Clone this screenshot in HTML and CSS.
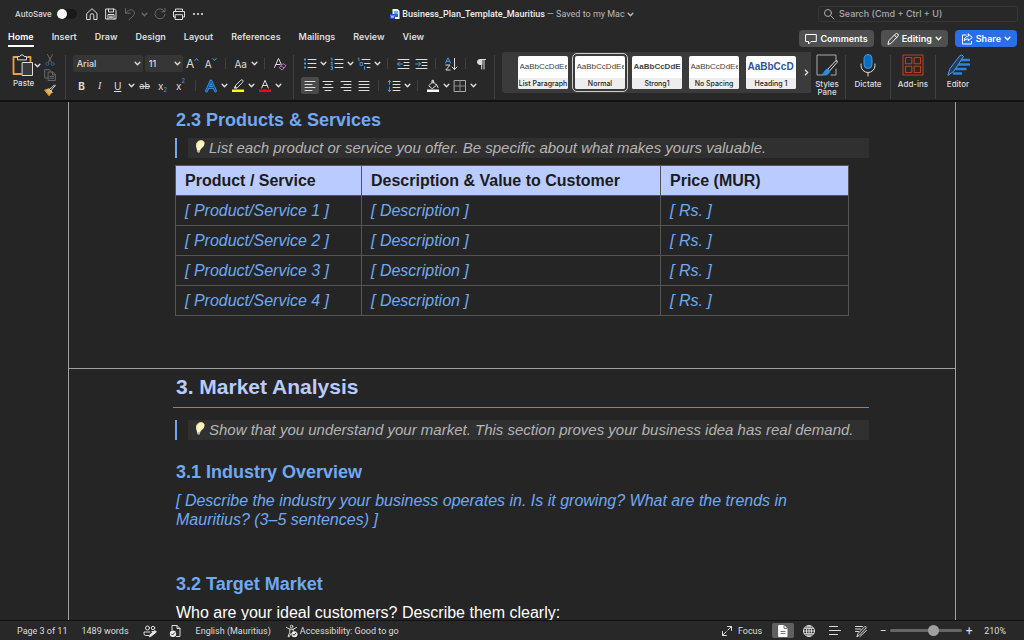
FILE: index.html
```html
<!DOCTYPE html>
<html lang="en">

<head>
    <meta charset="UTF-8">
    <meta name="viewport" content="width=device-width, initial-scale=1.0">
    <title>Business_Plan_Template_Mauritius</title>
    <link rel="stylesheet" href="styles.css">
</head>

<body>
    <!-- shared icons -->
    <svg class="sprite">
        <symbol id="chev" viewBox="0 0 6 6"><path d="M1 2l2 2 2-2" fill="none" stroke="currentColor" stroke-width="1.2" stroke-linecap="round" stroke-linejoin="round"/></symbol>
        <symbol id="bulb" viewBox="0 0 14 16"><path d="M4.500 12L3.500 8C2 4 4.500 .5 8 .5c3 0 4 2.500 3 5C10.300 7.300 8 8 7.300 10l-.8 2z" fill="#fff3c4"/><path d="M4 6C3 3 5 .5 8 .5c2 0 3.200 1 3.300 2.500" fill="none" stroke="#f3d27a" stroke-width=".8"/><path d="M4.300 10.200h2.900l-.7 2.600H4.800z" fill="#b9b39c"/></symbol>
    </svg>

    <div class="app">
        <!-- title bar -->
        <header class="titlebar">
            <div class="quick">
                <label class="autosave">AutoSave <input type="checkbox" class="toggle"></label>
                <button aria-label="Home"><svg class="i14" viewBox="0 0 14 14"><path d="M2 6.300L7 1.700l5 4.600V12.500H8.800V8.500a1.800 1.800 0 0 0-3.600 0v4H2z"/></svg></button>
                <button aria-label="Save"><svg class="i14" viewBox="0 0 14 14"><path d="M2 2h8.500L12 3.500V12H2zM4.500 2v3h5V2M4 12V7.500h6V12M5.500 9.200h3M5.500 10.700h3"/></svg></button>
                <button aria-label="Undo" class="dim"><svg class="i14" viewBox="0 0 14 14"><path d="M2.500 1.500v4.700h4.700M2.700 6C5 3 8 2 10 3.500c2.300 1.800 1.500 4 0 5.500L6 12.700"/></svg></button>
                <button aria-label="Undo list" class="dim narrow"><svg class="chev"><use href="#chev"/></svg></button>
                <button aria-label="Redo" class="dim"><svg class="i14" viewBox="0 0 14 14"><path d="M11.500 4.500A5 5 0 1 0 12 7.500M12 1.500v3.300H8.700"/></svg></button>
                <button aria-label="Print"><svg class="i14" viewBox="0 0 14 14"><path d="M3.500 4.500V2h7v2.500M3.500 10H1.500V4.500h11V10h-2M3.500 7.700h7V12.500h-7z"/></svg></button>
                <button aria-label="More"><svg class="i14 solid" viewBox="0 0 14 14"><circle cx="3" cy="7" r="1.100"/><circle cx="7" cy="7" r="1.100"/><circle cx="11" cy="7" r="1.100"/></svg></button>
            </div>
            <div class="doc-name">
                <svg class="file-icon" viewBox="0 0 10 12"><path d="M2.500 1h5L9.500 3v8h-7z" fill="#f5f8ff"/><path d="M4 3h4v5H4z" fill="#55b6f5"/><path d="M4 6h4v3H4z" fill="#2167d8"/><path d="M0 6h5v5H0z" fill="#1c4fc4"/><path d="M1 7.300l.8 2.400.7-2 .7 2 .8-2.400" fill="none" stroke="#fff" stroke-width=".6"/></svg>
                <b>Business_Plan_Template_Mauritius</b><span>— Saved to my Mac</span>
                <svg class="chev"><use href="#chev"/></svg>
            </div>
            <label class="search">
                <svg class="i12" viewBox="0 0 12 12"><circle cx="5" cy="5" r="3.500"/><path d="M7.600 7.600L11 11"/></svg>
                <input type="text" placeholder="Search (Cmd + Ctrl + U)" aria-label="Search">
            </label>
        </header>

        <!-- tabs -->
        <div class="tabs">
            <nav>
                <a href="#" class="active">Home</a>
                <a href="#">Insert</a>
                <a href="#">Draw</a>
                <a href="#">Design</a>
                <a href="#">Layout</a>
                <a href="#">References</a>
                <a href="#">Mailings</a>
                <a href="#">Review</a>
                <a href="#">View</a>
            </nav>
            <div class="actions">
                <button><svg class="i12" viewBox="0 0 12 12"><path d="M1 1.500h10.300v7H6L3.500 11V8.500H1z"/></svg>Comments</button>
                <button><svg class="i12" viewBox="0 0 12 12"><path d="M1 11l.8-3.300L8.500 1a1.300 1.300 0 0 1 2.300 2.300L4.200 10.200zM7.500 2.200l2.200 2.200"/></svg>Editing<svg class="chev"><use href="#chev"/></svg></button>
                <button class="share"><svg class="i12" viewBox="0 0 12 12"><path d="M5 2H1.500v9h9V8.500M7.300 1l4 3.500-4 3.200V5.800C5.500 5.800 4.200 6.500 3.200 8c.1-2.700 1.500-4.700 4.100-5z"/></svg>Share<svg class="chev"><use href="#chev"/></svg></button>
            </div>
        </div>

        <!-- ribbon -->
        <div class="ribbon">
            <div class="clipboard">
                <button class="paste">
                    <span>
                        <svg class="i24" viewBox="0 0 24 24"><path d="M6 4H2.500v17H10M17 4h2.500v4" stroke="#e8a33d" stroke-width="1.800"/><path d="M6.500 6.500V3.500h2.300a2.300 2.300 0 0 1 4.400 0h2.300v3z"/><path d="M11.500 9.500h10v13h-10z" fill="#3a3a3a"/></svg>
                        <svg class="chev"><use href="#chev"/></svg>
                    </span>
                    Paste
                </button>
                <div class="clip-tools">
                    <button aria-label="Cut" class="dim"><svg class="i12" viewBox="0 0 12 12"><path d="M3.500 0.500l4.200 8M8.500 0.500l-4.200 8"/><g stroke="#2c5f8c"><circle cx="3.300" cy="10" r="1.500"/><circle cx="8.700" cy="10" r="1.500"/></g></svg></button>
                    <button aria-label="Copy" class="dim"><svg class="i12" viewBox="0 0 12 12"><path d="M4 9H.7V.7h4.600L7 2.300M4.500 3h4.300l2.500 2.500v6H4.500zM8.500 3v2.800h2.800M6 7.500h3.500M6 9.300h3.500"/></svg></button>
                    <button aria-label="Format painter"><svg class="i12" viewBox="0 0 12 12"><path d="M1 6l4-.8L8 8l-2.800 3.500z" fill="#f0b04e" stroke="#e8a33d"/><path d="M4.300 4.600l4 4M5.800 4.800l1.700-1 3-3 .9.900-3 3-1 1.800"/></svg></button>
                </div>
            </div>
            <i class="divider"></i>

            <div class="group">
                <div class="row">
                    <span class="pick font"><select aria-label="Font"><option>Arial</option></select><svg class="chev"><use href="#chev"/></svg></span>
                    <span class="pick size"><select aria-label="Font size"><option>11</option></select><svg class="chev"><use href="#chev"/></svg></span>
                    <button aria-label="Grow font" class="letter big">A<svg class="caret" viewBox="0 0 5 5"><path d="M.8 3.500L2.500 1.500l1.700 2"/></svg></button>
                    <button aria-label="Shrink font" class="letter">A<svg class="caret" viewBox="0 0 5 5"><path d="M.8 1.500l1.700 2 1.700-2"/></svg></button>
                    <i class="sep"></i>
                    <button class="letter">Aa</button>
                    <button class="drop" aria-label="Case options"><svg class="chev"><use href="#chev"/></svg></button>
                    <i class="sep"></i>
                    <button aria-label="Clear formatting"><svg class="i14" viewBox="0 0 14 14"><path d="M1.500 10.500L5.500 1.500l2.800 6M3 7.500h4"/><path d="M6.500 10.500l3.500-4 3 2.200-3.500 4zM8 8.800l3 2.200" stroke="#b86fc6"/></svg></button>
                </div>
                <div class="row">
                    <button class="letter"><b>B</b></button>
                    <button class="letter serif"><i>I</i></button>
                    <button class="letter"><u>U</u></button>
                    <button class="drop" aria-label="Underline styles"><svg class="chev"><use href="#chev"/></svg></button>
                    <button class="letter small"><s>ab</s></button>
                    <button class="letter">x<sub>2</sub></button>
                    <button class="letter">x<sup>2</sup></button>
                    <i class="sep"></i>
                    <button aria-label="Text effects"><svg class="i14" viewBox="0 0 14 14"><path d="M2.500 12L7 2l4.500 10M4.200 8.500h5.600" stroke="#2b8be6" stroke-width="3"/><path d="M2.500 12L7 2l4.500 10M4.200 8.500h5.600" stroke="#1d4468" stroke-width=".8"/></svg></button>
                    <button class="drop" aria-label="Text effect options"><svg class="chev"><use href="#chev"/></svg></button>
                    <button aria-label="Highlight"><svg class="i14" viewBox="0 0 14 14"><path d="M4.500 8.500V6.500L9.800 1.200a1 1 0 0 1 1.900 1.900L6.500 8.500zM4.500 7L3 9h2.500"/><path d="M1 10.500h12V13H1z" fill="#ff0" stroke="none"/></svg></button>
                    <button class="drop" aria-label="Highlight colors"><svg class="chev"><use href="#chev"/></svg></button>
                    <button aria-label="Font color"><svg class="i14" viewBox="0 0 14 14"><path d="M3.700 9L7 1.300 10.300 9M4.800 6.500h4.400"/><path d="M1 10.500h12V13H1z" fill="#f00" stroke="none"/></svg></button>
                    <button class="drop" aria-label="Font colors"><svg class="chev"><use href="#chev"/></svg></button>
                </div>
            </div>
            <i class="divider"></i>

            <div class="group para">
                <div class="row">
                    <button aria-label="Bullets"><svg class="i14" viewBox="0 0 14 14"><path d="M5 2.500h8M5 6.500h8M5 10.500h8"/><path d="M1 1.500h2v2H1zM1 5.500h2v2H1zM1 9.500h2v2H1z" fill="#3b9cf0" stroke="none"/></svg></button>
                    <button class="drop" aria-label="Bullet styles"><svg class="chev"><use href="#chev"/></svg></button>
                    <button aria-label="Numbering"><svg class="i14" viewBox="0 0 14 14"><path d="M5 2.500h8M5 6.500h8M5 10.500h8"/><path d="M1 1.500l1-.5v3M1 5.500h1.500L1 7.800h1.800M1 9.500h1.500v3H1M1.500 11h1" stroke="#3b8fd8"/></svg></button>
                    <button class="drop" aria-label="Number styles"><svg class="chev"><use href="#chev"/></svg></button>
                    <button aria-label="Multilevel list"><svg class="i14" viewBox="0 0 14 14"><path d="M5 2.500h8M7.500 6.500h5.500M10 10.500h3"/><path d="M1 1.500l1-.5v3M3.500 5.500h2v3h-2zM7.500 9.500v3" stroke="#3b8fd8"/></svg></button>
                    <button class="drop" aria-label="List styles"><svg class="chev"><use href="#chev"/></svg></button>
                    <i class="sep"></i>
                    <button aria-label="Decrease indent"><svg class="i14" viewBox="0 0 14 14"><path d="M2 2.500h11M8 5.500h5M8 8.500h5M2 11.500h11"/><path d="M6.500 7h-5M3.500 5l-2 2 2 2" stroke="#3b9cf0"/></svg></button>
                    <button aria-label="Increase indent"><svg class="i14" viewBox="0 0 14 14"><path d="M2 2.500h11M8 5.500h5M8 8.500h5M2 11.500h11"/><path d="M1.500 7h5M4.500 5l2 2-2 2" stroke="#3b9cf0"/></svg></button>
                    <i class="sep"></i>
                    <button aria-label="Sort"><svg class="i14" viewBox="0 0 14 14"><path d="M1.500 6L4 .8 6.500 6M2.400 4.300h3.200" stroke="#3b9cf0"/><path d="M1.800 8H6l-4.200 5H6.200M10.500 1.500v11M8 10l2.500 2.500L13 10"/></svg></button>
                    <i class="sep"></i>
                    <button aria-label="Show marks"><svg class="i14" viewBox="0 0 14 14"><path d="M7 2.500h4.500M7.700 2.500V12M10 2.500V12"/><path d="M7.500 2.500H6a2.500 2.500 0 0 0 0 5h1.500z" fill="#ddd"/></svg></button>
                </div>
                <div class="row">
                    <button aria-label="Align left" class="on"><svg class="i14" viewBox="0 0 14 14"><path d="M2 2.500h10M2 5.500h7M2 8.500h10M2 11.500h7"/></svg></button>
                    <button aria-label="Center"><svg class="i14" viewBox="0 0 14 14"><path d="M2 2.500h10M4 5.500h6M2 8.500h10M4 11.500h6"/></svg></button>
                    <button aria-label="Align right"><svg class="i14" viewBox="0 0 14 14"><path d="M2 2.500h10M5 5.500h7M2 8.500h10M5 11.500h7"/></svg></button>
                    <button aria-label="Justify"><svg class="i14" viewBox="0 0 14 14"><path d="M2 2.500h10M2 5.500h10M2 8.500h10M2 11.500h10"/></svg></button>
                    <i class="sep"></i>
                    <button aria-label="Line spacing"><svg class="i14" viewBox="0 0 14 14"><path d="M6 2.500h7M6 5.500h7M6 8.500h7M6 11.500h7"/><path d="M2.500 1.500v4M1 3l1.500-1.700L4 3M2.500 8v4.500M1 11l1.500 1.700L4 11" stroke="#3b9cf0"/></svg></button>
                    <button class="drop" aria-label="Spacing options"><svg class="chev"><use href="#chev"/></svg></button>
                    <i class="sep"></i>
                    <button aria-label="Shading"><svg class="i14" viewBox="0 0 14 14"><path d="M3 6.500L7 2.500l3.500 3.700-4 3.300zM6 4V1.300h1.500V4M10.500 5.500l1.500 3"/><path d="M1 10.500h12V13H1z" fill="#fff" stroke="none"/></svg></button>
                    <button class="drop" aria-label="Shading colors"><svg class="chev"><use href="#chev"/></svg></button>
                    <button aria-label="Borders"><svg class="i14" viewBox="0 0 14 14"><path d="M1.500 1.500h11v11h-11z" stroke="#aaa"/><path d="M7 1.500v11M1.500 7h11" stroke="#888"/></svg></button>
                    <button class="drop" aria-label="Border styles"><svg class="chev"><use href="#chev"/></svg></button>
                </div>
            </div>
            <i class="divider"></i>

            <div class="gallery">
                <button class="style"><span class="sample">AaBbCcDdEe</span><span class="name">List Paragraph</span></button>
                <button class="style current"><span class="sample">AaBbCcDdEe</span><span class="name">Normal</span></button>
                <button class="style strong"><span class="sample">AaBbCcDdE</span><span class="name">Strong1</span></button>
                <button class="style"><span class="sample">AaBbCcDdEe</span><span class="name">No Spacing</span></button>
                <button class="style heading"><span class="sample">AaBbCcD</span><span class="name">Heading 1</span></button>
                <button class="more" aria-label="More styles"><svg class="chev right"><use href="#chev"/></svg></button>
            </div>

            <div class="tools">
                <button><svg class="i24" viewBox="0 0 24 24"><path d="M21 8V2H2v20h6M21 16v6h-5" stroke="#aaa"/><path d="M12.500 16.500L21 7.500q2 0 1 2L14.500 18z"/><path d="M12.500 16c-3 0-2.500 4-5.500 5.500 4 1.500 7.500 0 7.500-3.500z" fill="#2d8ddd" stroke="#2d8ddd"/></svg>Styles Pane</button>
                <i class="divider"></i>
                <button><svg class="i24" viewBox="0 0 24 24"><rect x="8" y="1.500" width="8" height="14" rx="4" fill="#0f6cbd" stroke="#3b9cf0"/><path d="M5 11v1.500a7 7 0 0 0 14 0V11M12 19.500V23"/></svg>Dictate</button>
                <i class="divider"></i>
                <button><svg class="i24" viewBox="0 0 24 24"><path d="M2 2h20v20H2zM4.500 4.500h6.300v6.300H4.500zM13.200 4.500h6.300v6.300h-6.300zM4.500 13.200h6.300v6.300H4.500zM13.200 13.200h6.300v6.300h-6.300z" stroke="#b9411c" stroke-width="1.100"/></svg>Add-ins</button>
                <i class="divider"></i>
                <button><svg class="i24" viewBox="0 0 24 24"><path d="M14.500 7H23M13 11.500h10M10.500 16h9M8 20.500h7" stroke="#2b83e0" stroke-width="2.400"/><path d="M2 22l2-6.500L14 2.500q2-1.500 3.500 1L8 18z" fill="#223c5a" stroke="#4ba0f0"/></svg>Editor</button>
            </div>
        </div>

        <!-- document -->
        <main class="canvas">
            <section class="page">
                <h3>2.3 Products &amp; Services</h3>
                <div class="hint"><p><svg class="bulb"><use href="#bulb"/></svg>List each product or service you offer. Be specific about what makes yours valuable.</p></div>
                <table>
                    <thead>
                        <tr><th class="c1">Product / Service</th><th class="c2">Description &amp; Value to Customer</th><th>Price (MUR)</th></tr>
                    </thead>
                    <tbody>
                        <tr><td>[ Product/Service 1 ]</td><td>[ Description ]</td><td>[ Rs. ]</td></tr>
                        <tr><td>[ Product/Service 2 ]</td><td>[ Description ]</td><td>[ Rs. ]</td></tr>
                        <tr><td>[ Product/Service 3 ]</td><td>[ Description ]</td><td>[ Rs. ]</td></tr>
                        <tr><td>[ Product/Service 4 ]</td><td>[ Description ]</td><td>[ Rs. ]</td></tr>
                    </tbody>
                </table>
            </section>
            <section class="page next">
                <h2>3. Market Analysis</h2>
                <div class="hint"><p><svg class="bulb"><use href="#bulb"/></svg>Show that you understand your market. This section proves your business idea has real demand.</p></div>
                <h3 class="first">3.1 Industry Overview</h3>
                <p class="field">[ Describe the industry your business operates in. Is it growing? What are the trends in Mauritius? (3–5 sentences) ]</p>
                <h3>3.2 Target Market</h3>
                <p>Who are your ideal customers? Describe them clearly:</p>
            </section>
        </main>

        <!-- status bar -->
        <footer class="status">
            <div class="left">
                <span>Page 3 of 11</span>
                <span>1489 words</span>
                <button aria-label="Track changes"><svg class="i14" viewBox="0 0 14 14"><circle cx="4.500" cy="4" r="2"/><circle cx="10" cy="4" r="1.700"/><path d="M6 11.500H2.500Q1 11.500 1 9.500V8h6M9 7.500h2"/><path d="M6.500 12.500l.6-2 5-4 1.300 1.500-5 4z" fill="#eee"/></svg></button>
                <button aria-label="Proofing"><svg class="i14" viewBox="0 0 14 14"><path d="M4 6V1.500h5L12 4.500v8H8.500M9 1.500v3h3"/><circle cx="5" cy="9.800" r="3.200" fill="#eee" stroke="none"/><path d="M3.500 10l1 1 2.200-2.300" stroke="#222"/></svg></button>
                <span>English (Mauritius)</span>
                <button class="access"><svg class="i14" viewBox="0 0 14 14"><circle cx="6.500" cy="2.500" r="1.300"/><path d="M1.500 3.500l3.300 1.700h3.400l3.300-1.700M4.800 5.200v3L3 12.500l1.200.3L6 9.500M8.200 5.200V7"/><circle cx="9.500" cy="10.200" r="3" fill="#eee" stroke="none"/><path d="M8 10.300l1 1 2-2.300" stroke="#222"/></svg>Accessibility: Good to go</button>
            </div>
            <div class="view">
                <button class="focus"><svg class="i12" viewBox="0 0 12 12"><path d="M6.500 1.500h4v4M10.500 1.500L6.800 5.200M5.500 10.500h-4v-4M1.500 10.500l3.700-3.700"/></svg>Focus</button>
                <button aria-label="Print layout" class="mode on"><svg class="i14" viewBox="0 0 14 14"><path d="M3 1.500h5l3 3v8H3z" fill="#fff" stroke="#fff"/><path d="M8 1.500v3h3M5 7.500h4M5 9.500h4" stroke="#777"/></svg></button>
                <button aria-label="Web layout" class="mode"><svg class="i14" viewBox="0 0 14 14"><circle cx="7" cy="7" r="5.500"/><ellipse cx="7" cy="7" rx="2.500" ry="5.500"/><path d="M1.500 7h11M2.300 4.300h9.400M2.300 9.700h9.400M7 1.500v11"/></svg></button>
                <button aria-label="Outline" class="mode"><svg class="i14" viewBox="0 0 14 14"><path d="M1.500 2.500h8M1.500 6.500h11M1.500 10.500h8"/></svg></button>
                <button aria-label="Draft" class="mode"><svg class="i14" viewBox="0 0 14 14"><path d="M1.500 2.500h7M1.500 5h5M1.500 7.500h3M3 12.500l1-3L11 2.300l1.500 1.400L5.500 11zM6 12.500l6.500-6"/></svg></button>
                <button aria-label="Zoom out" class="step">−</button>
                <input type="range" class="zoom" min="0" max="100" value="62" aria-label="Zoom">
                <button aria-label="Zoom in" class="step">+</button>
                <span>210%</span>
            </div>
        </footer>
    </div>
</body>

</html>
```
FILE: styles.css
```css
* {
    margin: 0;
    padding: 0;
    box-sizing: border-box;
}

body {
    background: #252525;
    color: #ddd;
    font: 9px/12px Inter, "Liberation Sans", sans-serif;
}

button,
input,
select {
    border: none;
    outline: none;
    background: none;
    color: inherit;
    font: inherit;
}

button {
    display: flex;
    align-items: center;
    justify-content: center;
}

a {
    color: inherit;
    text-decoration: none;
}

svg {
    flex: none;
    fill: none;
    stroke: currentColor;
    stroke-linecap: round;
    stroke-linejoin: round;
}

.sprite {
    display: none;
}

.i12 {
    width: 12px;
    height: 12px;
}

.i14 {
    width: 14px;
    height: 14px;
}

.i24 {
    width: 24px;
    height: 24px;
}

.solid {
    fill: currentColor;
    stroke: none;
}

.chev {
    width: 7px;
    height: 7px;
}

.right {
    transform: rotate(-90deg);
}

.dim {
    color: #6a6a6a;
}

.app {
    display: flex;
    flex-direction: column;
    height: 100vh;
    overflow: hidden;
}

.titlebar,
.tabs,
.ribbon {
    background: #282828;
}

/* title bar */
.titlebar {
    display: grid;
    grid-template-columns: 1fr auto 1fr;
    align-items: center;
    height: 28px;
    padding: 0 6px;
}

.quick {
    display: flex;
    align-items: center;
    gap: 5px;
    padding-left: 9px;
}

.autosave {
    display: flex;
    align-items: center;
    gap: 5px;
    margin-right: 3px;
    font-size: 8px;
    font-weight: 500;
}

.toggle {
    appearance: none;
    width: 20px;
    height: 10px;
    border-radius: 5px;
    background: #191919;
}

.toggle::before {
    content: "";
    display: block;
    width: 10px;
    height: 10px;
    border-radius: 50%;
    background: #fff;
}

.narrow {
    width: 6px;
}

.doc-name {
    display: flex;
    align-items: center;
    gap: 2px;
    color: #bbb;
    font-family: Roboto, "Liberation Sans", sans-serif;
}

.doc-name b {
    color: #eee;
    font-weight: 500;
}

.file-icon {
    width: 10px;
    height: 12px;
    stroke: none;
}

.search {
    display: flex;
    align-items: center;
    justify-self: end;
    gap: 4px;
    width: 200px;
    height: 16px;
    padding-left: 4px;
    border: 1px solid #363636;
    border-radius: 3px;
    color: #aaa;
}

.search input {
    flex: 1;
    min-width: 0;
    font-weight: 500;
}

.search input::placeholder {
    color: #aaa;
}

/* tabs */
.tabs {
    display: flex;
    justify-content: space-between;
    height: 22px;
    padding: 0 7px 0 8px;
}

.tabs nav {
    display: flex;
    align-items: flex-start;
    gap: 18px;
    padding-top: 3px;
    font-weight: 600;
}

.tabs nav a {
    padding-bottom: 2px;
    border-bottom: 2px solid transparent;
}

.tabs nav .active {
    border-color: #fff;
    color: #fff;
}

.actions {
    display: flex;
    gap: 7px;
    padding-top: 2px;
}

.actions button {
    gap: 3px;
    height: 17px;
    padding: 0 6px;
    border-radius: 4px;
    background: #505050;
    color: #fff;
    font-weight: 600;
}

.actions .share {
    background: #2a6fe8;
}

/* ribbon */
.ribbon {
    display: flex;
    height: 52px;
    padding: 2px 48px 0 11px;
    border-bottom: 2px solid #111;
}

.divider {
    flex: none;
    width: 1px;
    height: 44px;
    margin-top: 3px;
    background: #404040;
}

.clipboard {
    display: flex;
    gap: 4px;
    width: 54px;
}

.paste {
    flex-direction: column;
    justify-content: flex-start;
    width: 29px;
    align-items: flex-start;
    padding-left: 2px;
    font-size: 8px;
    font-weight: 500;
}

.paste span {
    display: flex;
    align-items: center;
    margin-left: -2px;
    padding-top: 1px;
}

.paste .chev {
    margin-left: -1px;
}

.clip-tools {
    display: flex;
    flex-direction: column;
    gap: 3px;
    padding-top: 2px;
}

.group {
    display: flex;
    flex-direction: column;
    gap: 5px;
    width: 229px;
    padding: 3px 0 0 7px;
}

.group.para {
    width: 201px;
}

.row {
    display: flex;
    height: 17px;
}

.row button {
    width: 18px;
}

.row .drop {
    width: 9px;
}

.row .on {
    border-radius: 2px;
    background: #4a4a4a;
}

.sep {
    width: 1px;
    margin: 3px 6px 3px 5px;
    background: #404040;
}

.pick {
    display: flex;
    align-items: center;
    border-radius: 2px;
    background: #363636;
}

.pick select {
    flex: 1;
    min-width: 0;
    appearance: none;
    padding-left: 4px;
    font-weight: 500;
}

.pick .chev {
    margin-right: 2px;
}

.font {
    width: 70px;
    margin-right: 2px;
}

.size {
    width: 38px;
    margin-right: 1px;
}

.letter {
    font-size: 10px;
}

.letter.big {
    font-size: 12px;
}

.letter.small {
    font-size: 9px;
}

.letter.serif {
    font-family: "Liberation Serif", serif;
}

.letter sub,
.letter sup {
    color: #3b9cf0;
    font-size: 6px;
    line-height: 8px;
}

.letter sub {
    align-self: flex-end;
}

.letter sup {
    align-self: flex-start;
}

.caret {
    align-self: flex-start;
    width: 5px;
    height: 5px;
    margin-top: 2px;
    stroke: #3b9cf0;
}

/* style gallery */
.gallery {
    display: flex;
    flex: 1 0 auto;
    align-items: center;
    gap: 7px;
    height: 41px;
    margin-left: 7px;
    padding-left: 16px;
    border-radius: 3px 0 0 3px;
    background: #3b3b3b;
}

.style {
    flex-direction: column;
    width: 50px;
    height: 33px;
    overflow: hidden;
    border-radius: 2px;
    background: #fff;
    color: #444;
}

.style.current {
    outline: 1px solid #ccc;
    outline-offset: 2px;
}

.sample {
    width: 47px;
    height: 22px;
    overflow: hidden;
    font: 8px/22px "Liberation Sans", Arial, sans-serif;
    text-align: left;
    white-space: nowrap;
}

.strong .sample {
    font-weight: bold;
}

.heading .sample {
    color: #2f5496;
    font-size: 10px;
    font-weight: bold;
}

.name {
    width: 100%;
    background: #eee;
    color: #222;
    font-size: 7px;
    font-weight: 500;
    line-height: 11px;
    white-space: nowrap;
}

.more {
    width: 10px;
    margin-left: -2px;
}

.tools {
    display: flex;
    gap: 4px;
    padding-left: 2px;
}

.tools button {
    flex-direction: column;
    justify-content: flex-start;
    width: 36px;
    padding-top: 1px;
    font-size: 8px;
    font-weight: 500;
    line-height: 8px;
}

.tools svg {
    margin-bottom: 3px;
}

.tools button:first-child {
    width: 28px;
}

/* document */
.canvas {
    flex: 1;
    min-height: 0;
    overflow: hidden;
    padding: 0 68px;
    font: 16px/20px "Liberation Sans", Arial, sans-serif;
}

.page {
    padding: 7px 86px 52px 107px;
    border: solid #a0a0a0;
    border-width: 0 1px;
}

.page.next {
    padding-top: 5px;
    border-top-width: 1px;
}

.page h2 {
    margin: 0 0 12px -3px;
    padding: 0 0 7px 3px;
    border-bottom: 1px solid #5a8fc4;
    color: #b9cbff;
    font-size: 21px;
    line-height: 26px;
}

.page h3 {
    color: #70a9f2;
    font-size: 18px;
    line-height: 22px;
}

.page.next h3 {
    margin: 44px 0 8px;
}

.page.next .first {
    margin-top: 21px;
}

.page > p {
    color: #fff;
}

.page > .field {
    padding-right: 20px;
    color: #70a9f2;
    font-style: italic;
    line-height: 19px;
}

.hint {
    margin-left: -1px;
    padding-left: 11px;
    border-left: 2px solid #70a9f2;
    color: #b4b4b4;
    font-size: 15px;
    font-style: italic;
}

.page h3 + .hint {
    margin-top: 7px;
}

.hint p {
    padding-left: 5px;
    background: #303030;
    white-space: nowrap;
}

.bulb {
    width: 14px;
    height: 16px;
    margin-right: 2px;
    stroke: none;
    vertical-align: -3px;
}

table {
    width: calc(100% - 19px);
    margin: 7px 0 0 -1px;
    border-collapse: collapse;
    table-layout: fixed;
}

th,
td {
    height: 30px;
    padding-left: 9px;
    border: 1px solid #555;
    text-align: left;
}

th {
    background: #b9cbff;
    color: #1c1c1c;
}

td {
    color: #70a9f2;
    font-style: italic;
}

.c1 {
    width: 186px;
}

.c2 {
    width: 299px;
}

/* status bar */
.status {
    display: flex;
    justify-content: space-between;
    height: 20px;
    padding: 0 18px 0 17px;
    border-top: 1px solid #111;
    background: #282828;
    font-family: Roboto, "Liberation Sans", sans-serif;
}

.left,
.view {
    display: flex;
    align-items: center;
}

.left {
    gap: 14px;
}

.left button + button {
    margin-left: -3px;
}

.access {
    gap: 1px;
}

.focus {
    gap: 5px;
    margin-right: 10px;
}

.mode {
    width: 22px;
    height: 15px;
    margin-right: 4px;
    border-radius: 2px;
}

.mode.on {
    background: #606060;
}

.step {
    width: 14px;
    font-size: 12px;
}

.view span {
    margin-left: 8px;
}

.zoom {
    appearance: none;
    width: 72px;
    height: 12px;
}

.zoom::-webkit-slider-runnable-track {
    height: 3px;
    border-radius: 2px;
    background: #666;
}

.zoom::-webkit-slider-thumb {
    appearance: none;
    width: 11px;
    height: 11px;
    margin-top: -4px;
    border-radius: 50%;
    background: #a0a0a0;
}
```
